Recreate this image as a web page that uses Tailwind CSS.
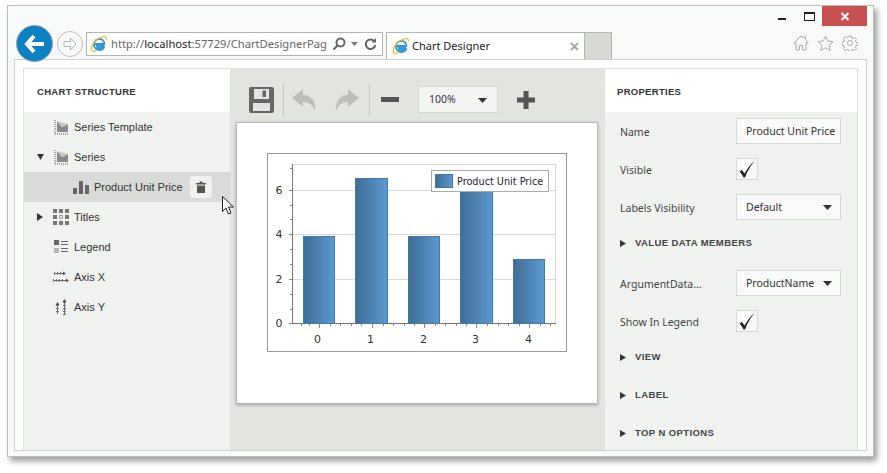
<!DOCTYPE html>
<html lang="en">
<head>
    <meta charset="utf-8"/>
    <title>Chart Designer</title>
    <script src="https://cdn.jsdelivr.net/npm/@tailwindcss/browser@4"></script>
</head>
<body class="bg-white w-[887px] h-[473px] overflow-hidden font-['Liberation_Sans',sans-serif]">
    <!-- browser window -->
    <div class="relative ml-[7px] mt-[5px] w-[867px] h-[452px] border border-[#bcbfbc] bg-[#f8faf9] shadow-[3px_4px_6px_rgba(0,0,0,0.4)] flex flex-col">
        <!-- title bar -->
        <div class="flex justify-end items-start h-[20px] shrink-0 pr-[6px]">
            <div class="w-[8px] h-[2px] bg-[#222] mt-[12px] mr-[18px]"></div>
            <div class="w-[11px] h-[9px] border border-[#222] border-t-2 mt-[6px] mr-[7px]"></div>
            <div class="w-[45px] h-[20px] bg-[#c75050] flex items-center justify-center">
                <svg width="10" height="9" viewBox="0 0 10 9"><path d="M1.500 1 8.500 8M8.500 1 1.500 8" stroke="#fff" stroke-width="2"/></svg>
            </div>
        </div>
        <!-- address bar row -->
        <div class="flex h-[33px] shrink-0 items-start relative">
            <div class="w-[37px] h-[37px] mt-[-1px] ml-[8px] shrink-0 rounded-full bg-[#0c82c4] border border-[#9aa6ae] flex items-center justify-center">
                <svg width="22" height="20" viewBox="0 0 22 20"><path d="M10 2 3 10l7 8M3 10h17" fill="none" stroke="#fff" stroke-width="4"/></svg>
            </div>
            <div class="w-[26px] h-[26px] mt-[5px] ml-[4px] shrink-0 rounded-full border border-[#bbb] flex items-center justify-center">
                <svg width="16" height="14" viewBox="0 0 16 14"><path d="M8.500 1 14 7l-5.500 6V9.500H2v-5h6.500z" fill="none" stroke="#b5b5b5"/></svg>
            </div>
            <div class="w-[297px] h-[24px] mt-[6px] ml-[3px] shrink-0 bg-white border border-[#b4b4b4] flex items-center pl-[3px] font-['Noto_Sans',sans-serif] text-[11.2px] text-[#666]">
                <svg width="18" height="18" viewBox="0 0 18 18" class="shrink-0"><path d="M3.500 9h10.800c0-3-2-5-4.800-5S4 6 4 9.500 6.500 15 9.500 15c2 0 3.800-1 4.500-2.800h-3c-.5.6-1 1-1.700 1-1.300 0-2.300-1-2.300-2.200h7" fill="none" stroke="#2f9ad6" stroke-width="2"/><path d="M1.500 15C0 12 5 4 12 2c3-1 5 0 4.500 2.500M1.500 15c1 1.500 3 1.500 5 .5" fill="none" stroke="#f3b81f" stroke-width="1.200"/></svg>
                <div class="w-[215px] ml-[3px] pt-[1px] whitespace-nowrap">http://<span class="text-[#222]">localhost</span>:57729/ChartDesignerPag</div>
                <svg width="14" height="14" viewBox="0 0 14 14" class="ml-[6px] shrink-0"><circle cx="8.500" cy="5.500" r="4" fill="none" stroke="#666" stroke-width="2"/><path d="M5.500 8.500 1.500 12.500" stroke="#666" stroke-width="2.200"/></svg>
                <svg width="7" height="4" viewBox="0 0 7 4" class="ml-[5px] shrink-0"><path d="M0 0h7L3.500 4z" fill="#777"/></svg>
                <svg width="13" height="13" viewBox="0 0 13 13" class="ml-[6px] shrink-0"><path d="M10.500 3.500A4.800 4.800 0 1 0 11.300 7" fill="none" stroke="#666" stroke-width="2"/><path d="M7.500 4.500h4.500V0z" fill="#666"/></svg>
            </div>
            <div class="w-[199px] h-[27px] mt-[6px] ml-[3px] shrink-0 bg-white border border-b-0 border-[#b4b4b4] flex items-center pl-[5px] pr-[5px] font-['Noto_Sans',sans-serif] text-[11px] text-[#222]">
                <svg width="18" height="18" viewBox="0 0 18 18" class="shrink-0"><path d="M3.500 9h10.800c0-3-2-5-4.800-5S4 6 4 9.500 6.500 15 9.500 15c2 0 3.800-1 4.500-2.800h-3c-.5.6-1 1-1.700 1-1.300 0-2.300-1-2.300-2.200h7" fill="none" stroke="#2f9ad6" stroke-width="2"/><path d="M1.500 15C0 12 5 4 12 2c3-1 5 0 4.500 2.500M1.500 15c1 1.500 3 1.500 5 .5" fill="none" stroke="#f3b81f" stroke-width="1.200"/></svg>
                <span class="ml-[2px] pt-[1px] flex-1">Chart Designer</span>
                <svg width="9" height="9" viewBox="0 0 9 9"><path d="M1 1 8 8M8 1 1 8" stroke="#aaa" stroke-width="2"/></svg>
            </div>
            <div class="w-[27px] h-[27px] mt-[6px] shrink-0 bg-[#d7d9d5] border-r border-t border-[#b4b4b4]"></div>
            <div class="flex gap-[8px] ml-auto mr-[15px] mt-[9px] items-center">
                <svg width="16" height="16" viewBox="0 0 16 16"><path d="M8 1 .8 8h2.200v7h3.500v-4.500h3V15h3.500V8h2.200L12.500 4.500V2h-2v.8z" fill="none" stroke="#aaa"/></svg>
                <svg width="17" height="16" viewBox="0 0 17 16"><path d="m8.500 1 2.300 5 5.200.6-3.900 3.500 1.100 5.400-4.700-2.700-4.700 2.700 1.100-5.400L1 6.600 6.200 6z" fill="none" stroke="#aaa"/></svg>
                <svg width="16" height="16" viewBox="0 0 16 16"><circle cx="8" cy="8" r="2.500" fill="none" stroke="#aaa"/><path d="M6.800 1h2.400l.4 2 1.400.6 1.800-1.100 1.700 1.700-1.100 1.800.6 1.400 2 .4v2.400l-2 .4-.6 1.400 1.100 1.800-1.700 1.700-1.800-1.100-1.400.6-.4 2H6.800l-.4-2-1.400-.6-1.800 1.100-1.700-1.700 1.100-1.800-.6-1.400-2-.4V6.800l2-.4.6-1.400-1.100-1.800 1.700-1.700L5 2.600 6.400 2z" fill="none" stroke="#aaa"/></svg>
            </div>
        </div>
        <!-- page area -->
        <div class="ml-[6px] w-[853px] h-[392px] shrink-0 border border-[#cfd1cf] bg-white pl-[8px] pr-[8px] pt-[8px]">
            <div class="flex h-[382px] border-t border-l border-r border-[#e0e2e0]">
                <!-- chart structure -->
                <div class="w-[207px] shrink-0 flex flex-col bg-[#f0f2f0] border-r border-[#dfe1de]">
                    <div class="h-[43px] shrink-0 bg-white flex items-center pl-[13px] pt-[3px] text-[9.5px] font-bold tracking-[0.3px] text-[#333]">CHART STRUCTURE</div>
                    <div class="text-[11px] text-[#333]">
                        <div class="flex items-center h-[30px] pl-[29px]">
                            <svg width="16" height="16" viewBox="0 0 16 16" class="mr-[5px]"><path d="M4 13V2l5 6 6-3v8z" fill="#8a8a8a"/><path d="M4 2l5 6 6-3" fill="#c8c8c8"/><path d="M2 1v14h14" fill="none" stroke="#555" stroke-dasharray="1 1"/></svg>
                            Series Template
                        </div>
                        <div class="flex items-center h-[30px] pl-[13px]">
                            <svg width="8" height="6" viewBox="0 0 8 6" class="mr-[8px]"><path d="M0 0h7L3.500 6z" fill="#333"/></svg>
                            <svg width="16" height="16" viewBox="0 0 16 16" class="mr-[5px]"><path d="M4 13V2l5 6 6-3v8z" fill="#8a8a8a"/><path d="M4 2l5 6 6-3" fill="#c8c8c8"/><path d="M2 1v14h14" fill="none" stroke="#555" stroke-dasharray="1 1"/></svg>
                            Series
                        </div>
                        <div class="flex items-center h-[30px] pl-[49px] bg-[#d9dbd8] relative">
                            <svg width="16" height="14" viewBox="0 0 16 14" class="mr-[5px]"><path d="M0 8h4v6H0zM6 1h4v13H6zM12 5h4v9h-4z" fill="#666"/></svg>
                            Product Unit Price
                            <div class="absolute left-[166px] top-[4px] w-[22px] h-[22px] rounded-[3px] bg-[#f0f2f0] flex items-center justify-center">
                                <svg width="10" height="12" viewBox="0 0 10 12"><path d="M0 2h3.500V.5h3V2H10v1.500H0zM1 4.500h8V12H1z" fill="#555"/></svg>
                            </div>
                        </div>
                        <div class="flex items-center h-[30px] pl-[13px]">
                            <svg width="6" height="8" viewBox="0 0 6 8" class="mr-[10px]"><path d="M0 0l6 4-6 4z" fill="#333"/></svg>
                            <svg width="16" height="16" viewBox="0 0 16 16" class="mr-[5px]"><path d="M0 0h4v4H0zM6 0h4v4H6zM12 0h4v4h-4zM0 6h4v4H0zM12 6h4v4h-4zM0 12h4v4H0zM6 12h4v4H6zM12 12h4v4h-4z" fill="#777"/><path d="M6.500 6.500h3v3h-3z" fill="none" stroke="#999"/></svg>
                            Titles
                        </div>
                        <div class="flex items-center h-[30px] pl-[29px]">
                            <svg width="16" height="16" viewBox="0 0 16 16" class="mr-[5px]"><path d="M1 1h5v5H1z" fill="#666"/><path d="M1 9h5v5H1z" fill="#b5b5b5"/><path d="M8 2.500h7M8 5.500h7M8 9.500h7M8 12.500h7" stroke="#666"/></svg>
                            Legend
                        </div>
                        <div class="flex items-center h-[30px] pl-[29px]">
                            <svg width="16" height="16" viewBox="0 0 16 16" class="mr-[5px]"><path d="M1 4.500h10M0 11.500h13" stroke="#666"/><path d="M1 4.500h9M0 11.500h12" stroke="#777" stroke-width="3" stroke-dasharray="1 2"/><path d="M10 2.500l3 2-3 2zM13 9.500l3 2-3 2z" fill="#555"/></svg>
                            Axis X
                        </div>
                        <div class="flex items-center h-[30px] pl-[29px]">
                            <svg width="16" height="16" viewBox="0 0 16 16" class="mr-[5px]"><path d="M4.500 6v9M11.500 3v13" stroke="#666"/><path d="M4.500 6v9M11.500 3v13" stroke="#777" stroke-width="3" stroke-dasharray="1 2"/><path d="M2.500 6l2-3 2 3zM9.500 3l2-3 2 3z" fill="#555"/></svg>
                            Axis Y
                        </div>
                    </div>
                </div>
                <!-- designer -->
                <div class="w-[373px] shrink-0 flex flex-col bg-[#e2e4e0] pl-[5px]">
                    <div class="h-[53px] shrink-0 flex items-center">
                        <svg width="25" height="26" viewBox="0 0 25 26" class="ml-[13px] mt-[8px] shrink-0"><path fill-rule="evenodd" d="M2 0h21a2 2 0 0 1 2 2v22a2 2 0 0 1-2 2H2a2 2 0 0 1-2-2V2a2 2 0 0 1 2-2zM5 2v10h15V2zM13.500 3.500h3.500v6.500h-3.500zM4 16v8h17v-8z" fill="#666"/></svg>
                        <div class="w-px h-[34px] bg-[#c5c7c3] ml-[9px] mt-[8px] shrink-0"></div>
                        <svg width="24" height="22" viewBox="0 0 24 22" class="ml-[8px] mt-[8px] shrink-0"><path d="M11 0 0 9l11 9v-5c6 0 10 3 12 9 1-10-4-16-12-16z" fill="#bcbebb"/></svg>
                        <svg width="24" height="22" viewBox="0 0 24 22" class="ml-[19px] mt-[8px] shrink-0"><path d="M13 0l11 9-11 9v-5C7 13 3 16 1 22 0 12 5 6 13 6z" fill="#bcbebb"/></svg>
                        <div class="w-px h-[34px] bg-[#c5c7c3] ml-[10px] mt-[8px] shrink-0"></div>
                        <div class="w-[18px] h-[5px] bg-[#555] ml-[11px] mt-[8px] shrink-0"></div>
                        <div class="w-[80px] h-[27px] ml-[19px] mt-[8px] shrink-0 bg-[#f3f5f3] border border-[#d6d8d5] flex items-center justify-between pl-[10px] pr-[10px] pt-[1px] font-['Noto_Sans',sans-serif] text-[10.5px] text-[#333]">
                            100%
                            <svg width="9" height="5" viewBox="0 0 9 5"><path d="M0 0h9L4.500 5z" fill="#333"/></svg>
                        </div>
                        <svg width="18" height="18" viewBox="0 0 18 18" class="ml-[19px] mt-[8px] shrink-0"><path d="M6.500 0h5v6.500H18v5h-6.500V18h-5v-6.500H0v-5h6.500z" fill="#555"/></svg>
                    </div>
                    <div class="w-[362px] h-[282px] bg-white border border-[#b9bbb8] shadow-[0_1px_3px_rgba(0,0,0,0.3)] pl-[30px] pt-[30px]">
                        <!-- chart -->
                        <svg width="300" height="199" viewBox="0 0 300 199" class="block font-['DejaVu_Sans',sans-serif]">
                            <defs>
                                <linearGradient id="barFill" x1="0" x2="1" y1="0" y2="0">
                                    <stop offset="0" stop-color="#3f6e95"/>
                                    <stop offset="0.35" stop-color="#4a7ca8"/>
                                    <stop offset="1" stop-color="#5a9ad2"/>
                                </linearGradient>
                            </defs>
                            <rect x="0.500" y="0.500" width="299" height="198" fill="#fff" stroke="#999"/>
                            <rect x="25.500" y="11.500" width="263" height="159" fill="#fff" stroke="#d8d8d8"/>
                            <path d="M25 37.500h264M25 81.500h264M25 126.500h264" stroke="#d8d8d8"/>
                            <path d="M25.500 11v160M25 170.500h264" stroke="#777"/>
                            <path d="M22 37.500h3M22 81.500h3M22 126.500h3M22 170.500h3M23 15.500h2M23 52.500h2M23 66.500h2M23 96.500h2M23 111.500h2M23 141.500h2M23 156.500h2" stroke="#888"/>
                            <path d="M52.500 171v4M105.500 171v4M157.500 171v4M209.500 171v4M262.500 171v4M34.500 171v2M42.500 171v2M63.500 171v2M73.500 171v2M84.500 171v2M94.500 171v2M116.500 171v2M126.500 171v2M137.500 171v2M147.500 171v2M168.500 171v2M178.500 171v2M189.500 171v2M199.500 171v2M220.500 171v2M231.500 171v2M241.500 171v2M252.500 171v2M273.500 171v2M283.500 171v2" stroke="#888"/>
                            <g fill="url(#barFill)" stroke="#4179a8">
                                <rect x="36.500" y="83.500" width="31" height="87"/>
                                <rect x="88.500" y="25.500" width="32" height="145"/>
                                <rect x="141.500" y="83.500" width="31" height="87"/>
                                <rect x="193.500" y="37.500" width="32" height="133"/>
                                <rect x="246.500" y="106.500" width="31" height="64"/>
                            </g>
                            <g font-size="11" fill="#333">
                                <text x="8.500" y="41">6</text>
                                <text x="8.500" y="85">4</text>
                                <text x="8.500" y="130">2</text>
                                <text x="8.500" y="174">0</text>
                                <text x="47" y="190">0</text>
                                <text x="100" y="190">1</text>
                                <text x="153" y="190">2</text>
                                <text x="205" y="190">3</text>
                                <text x="258" y="190">4</text>
                            </g>
                            <rect x="164.500" y="17.500" width="117" height="21" fill="#fff" stroke="#aaa"/>
                            <rect x="168.500" y="21.500" width="17" height="13" fill="url(#barFill)" stroke="#4179a8"/>
                            <text x="190" y="32" font-size="9.700" fill="#223">Product Unit Price</text>
                        </svg>
                    </div>
                </div>
                <!-- properties -->
                <div class="flex-1 flex flex-col bg-[#f0f2f0] border-l border-[#dfe1de]">
                    <div class="h-[43px] shrink-0 bg-white flex items-center pl-[12px] pt-[3px] text-[9.5px] font-bold tracking-[0.3px] text-[#333]">PROPERTIES</div>
                    <div class="pl-[15px] font-['Noto_Sans',sans-serif] text-[10.5px] text-[#444]">
                        <div class="flex items-center h-[38px]">
                            <span class="w-[116px] shrink-0 pt-[3px]">Name</span>
                            <div class="w-[105px] h-[26px] bg-[#f8f9f8] border border-[#d6d8d5] flex items-center pl-[9px] pt-[2px] whitespace-nowrap text-[#333]">Product Unit Price</div>
                        </div>
                        <div class="flex items-center h-[38px]">
                            <span class="w-[116px] shrink-0 pt-[3px]">Visible</span>
                            <div class="w-[22px] h-[22px] bg-[#f8f9f8] border border-[#d6d8d5] flex items-center justify-center">
                                <svg width="16" height="17" viewBox="0 0 16 17"><path d="M.5 10.500 3 9l2.500 3.500C8 8 11 3.500 15.500 0 11.500 5 8 10.500 6 16.500H4.500C3.500 14 2 12 .5 10.500z" fill="#222"/></svg>
                            </div>
                        </div>
                        <div class="flex items-center h-[38px]">
                            <span class="w-[116px] shrink-0 pt-[3px]">Labels Visibility</span>
                            <div class="w-[105px] h-[26px] bg-[#f8f9f8] border border-[#d6d8d5] flex items-center justify-between pl-[9px] pr-[8px] text-[#333]">
                                <span class="pt-[2px]">Default</span>
                                <svg width="9" height="5" viewBox="0 0 9 5"><path d="M0 0h9L4.500 5z" fill="#333"/></svg>
                            </div>
                        </div>
                        <div class="flex items-center h-[38px] pb-[4px] font-['Liberation_Sans',sans-serif] text-[9.5px] font-bold text-[#444] tracking-[0.4px]">
                            <svg width="6" height="7" viewBox="0 0 6 7" class="mr-[9px]"><path d="M0 0l6 3.500L0 7z" fill="#333"/></svg>
                            VALUE DATA MEMBERS
                        </div>
                        <div class="flex items-center h-[38px]">
                            <span class="w-[116px] shrink-0 pt-[3px]">ArgumentData...</span>
                            <div class="w-[105px] h-[26px] bg-[#f8f9f8] border border-[#d6d8d5] flex items-center justify-between pl-[9px] pr-[8px] text-[#333]">
                                <span class="pt-[2px]">ProductName</span>
                                <svg width="9" height="5" viewBox="0 0 9 5"><path d="M0 0h9L4.500 5z" fill="#333"/></svg>
                            </div>
                        </div>
                        <div class="flex items-center h-[38px]">
                            <span class="w-[116px] shrink-0 pt-[3px]">Show In Legend</span>
                            <div class="w-[22px] h-[22px] bg-[#f8f9f8] border border-[#d6d8d5] flex items-center justify-center">
                                <svg width="16" height="17" viewBox="0 0 16 17"><path d="M.5 10.500 3 9l2.500 3.500C8 8 11 3.500 15.500 0 11.500 5 8 10.500 6 16.500H4.500C3.500 14 2 12 .5 10.500z" fill="#222"/></svg>
                            </div>
                        </div>
                        <div class="flex items-center h-[38px] pb-[4px] font-['Liberation_Sans',sans-serif] text-[9.5px] font-bold text-[#444] tracking-[0.4px]">
                            <svg width="6" height="7" viewBox="0 0 6 7" class="mr-[9px]"><path d="M0 0l6 3.500L0 7z" fill="#333"/></svg>
                            VIEW
                        </div>
                        <div class="flex items-center h-[38px] pb-[4px] font-['Liberation_Sans',sans-serif] text-[9.5px] font-bold text-[#444] tracking-[0.4px]">
                            <svg width="6" height="7" viewBox="0 0 6 7" class="mr-[9px]"><path d="M0 0l6 3.500L0 7z" fill="#333"/></svg>
                            LABEL
                        </div>
                        <div class="flex items-center h-[38px] pb-[4px] font-['Liberation_Sans',sans-serif] text-[9.5px] font-bold text-[#444] tracking-[0.4px]">
                            <svg width="6" height="7" viewBox="0 0 6 7" class="mr-[9px]"><path d="M0 0l6 3.500L0 7z" fill="#333"/></svg>
                            TOP N OPTIONS
                        </div>
                    </div>
                </div>
            </div>
        </div>
        <!-- mouse cursor -->
        <svg width="13" height="19" viewBox="0 0 13 19" class="absolute left-[214px] top-[190px]"><path d="M.5.500v15l3.500-3.500 2.500 6 2.500-1-2.500-6h5z" fill="#fff" stroke="#222"/></svg>
    </div>
</body>
</html>
